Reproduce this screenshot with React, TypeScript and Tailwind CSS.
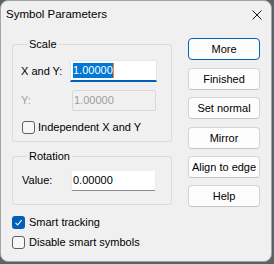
import React from "react";

function Checkbox({ checked }: { checked?: boolean }) {
  if (checked) {
    return (
      <span className="w-[13px] h-[13px] rounded-[3px] bg-[#005fb8] flex items-center justify-center shrink-0">
        <svg width="9" height="9" viewBox="0 0 9 9">
          <path d="M1.5 4.8 L3.6 6.9 L7.6 2.2" fill="none" stroke="#ffffff" strokeWidth="1.1" />
        </svg>
      </span>
    );
  }
  return <span className="w-[13px] h-[13px] rounded-[3px] border border-[#5f5f5f] bg-[#f7f7f7] shrink-0" />;
}

function Btn({ label, primary, className }: { label: string; primary?: boolean; className?: string }) {
  return (
    <div
      className={
        "h-[22px] w-[72px] rounded-[4px] border flex items-center justify-center text-[11px] text-black " +
        (primary ? "border-[#0062b8] bg-[#fdfdfd] " : "border-[#d3d3d3] border-b-[#c4c4c4] bg-[#fdfdfd] ") +
        (className ?? "")
      }
    >
      {label}
    </div>
  );
}

export default function App() {
  return (
    <div
      className="w-[274px] h-[264px] bg-[#55646a]"
      style={{ fontFamily: '"Liberation Sans", Arial, sans-serif' }}
    >
      <div className="w-[272px] h-[262px] bg-[#f0f0f0] rounded-[8px] border border-[#a3a3a3] flex flex-col">
        <div className="h-[28px] flex items-center justify-between pl-[5px] pr-[9px]">
          <span className="text-[11.5px] text-black leading-none">Symbol Parameters</span>
          <svg width="10" height="10" viewBox="0 0 10 10">
            <path d="M0.5 0.5 L9.5 9.5 M9.5 0.5 L0.5 9.5" stroke="#1b1b1b" strokeWidth="1" />
          </svg>
        </div>
        <div className="flex pl-[11px]">
          <div className="w-[160px] flex flex-col">
            <fieldset className="mt-[8px] border border-[#dcdcdc] rounded-[2px] px-[8px] pb-[7px]">
              <legend className="ml-[6px] px-[2px] text-[11px] leading-[14px] text-black">Scale</legend>
              <div className="mt-[9px] flex items-center h-[22px]">
                <span className="w-[49px] text-[11px] text-black">X and Y:</span>
                <div className="w-[87px] h-[22px] bg-white border border-[#e6e6e6] border-b-2 border-b-[#005fb8] rounded-t-[2px] flex items-center pl-[2px]">
                  <span className="bg-[#0078d7] text-white text-[11px] leading-[15px] h-[15px] inline-block">1.00000</span>
                  <span className="w-[1px] h-[15px] bg-[#f08a24]" />
                </div>
              </div>
              <div className="mt-[8px] flex items-center h-[21px]">
                <span className="w-[51px] text-[11px] text-[#a0a0a0]">Y:</span>
                <div className="w-[84px] h-[21px] bg-[#f0f0f0] border border-[#d8d8d8] rounded-[2px] flex items-center pl-[1px]">
                  <span className="text-[11px] text-[#9d9d9d]">1.00000</span>
                </div>
              </div>
              <div className="mt-[10px] flex items-center h-[13px] pl-[1px]">
                <Checkbox />
                <span className="ml-[3px] text-[11px] text-black">Independent X and Y</span>
              </div>
            </fieldset>
            <fieldset className="mt-[7px] border border-[#dcdcdc] rounded-[2px] px-[8px] pb-[13px]">
              <legend className="ml-[6px] px-[2px] text-[11px] leading-[14px] text-black">Rotation</legend>
              <div className="mt-[7px] flex items-center h-[21px]">
                <span className="w-[50px] pl-[1px] text-[11px] text-black">Value:</span>
                <div className="w-[85px] h-[21px] bg-white border border-[#ececec] border-b-[#8a8a8a] rounded-[2px] flex items-center pl-[1px]">
                  <span className="text-[11px] text-black">0.00000</span>
                </div>
              </div>
            </fieldset>
            <div className="mt-[11px] flex items-center h-[13px]">
              <Checkbox checked />
              <span className="ml-[4px] text-[11px] text-black">Smart tracking</span>
            </div>
            <div className="mt-[7px] flex items-center h-[13px]">
              <Checkbox />
              <span className="ml-[4px] text-[11px] text-black">Disable smart symbols</span>
            </div>
          </div>
          <div className="ml-[16px] flex flex-col">
            <Btn label="More" primary className="mt-[9px]" />
            <Btn label="Finished" className="mt-[8px]" />
            <Btn label="Set normal" className="mt-[7px]" />
            <Btn label="Mirror" className="mt-[8px]" />
            <Btn label="Align to edge" className="mt-[7px]" />
            <Btn label="Help" className="mt-[7px]" />
          </div>
        </div>
      </div>
    </div>
  );
}
